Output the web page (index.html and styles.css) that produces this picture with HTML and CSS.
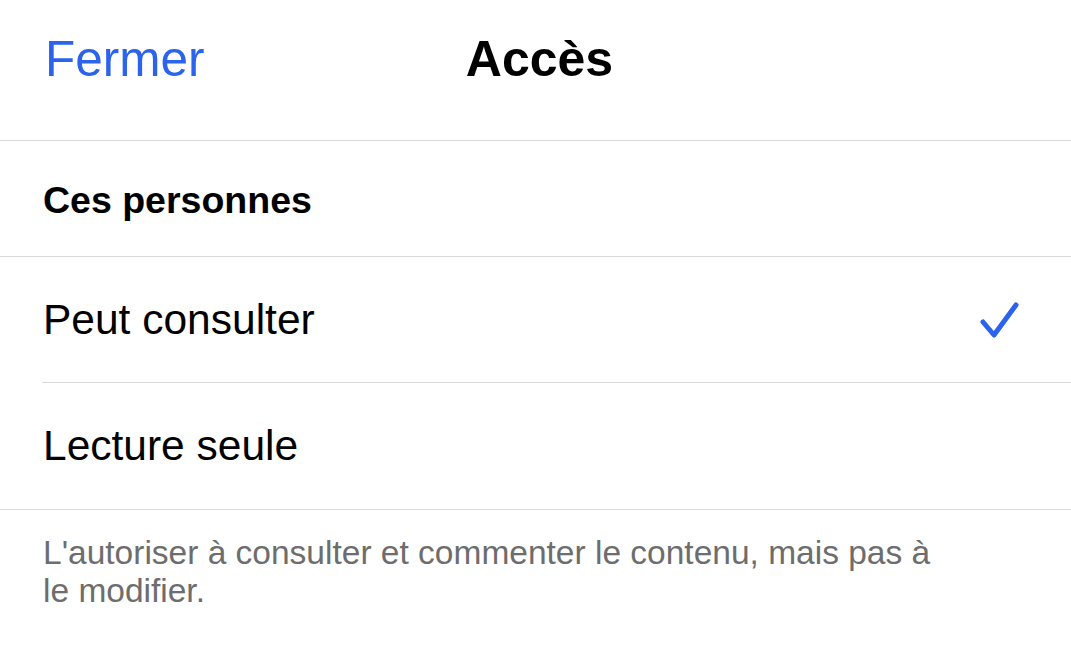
FILE: index.html
```html
<!DOCTYPE html>
<html lang="fr">
<head>
<meta charset="utf-8">
<title>Accès</title>
<link rel="stylesheet" href="styles.css">
</head>
<body>
<div class="screen">
  <header class="nav">
    <div class="nav-left"><span class="nav-close">Fermer</span></div>
    <h1 class="nav-title">Accès</h1>
    <div class="nav-right"></div>
  </header>
  <section class="group-head">
    <h2 class="group-title">Ces personnes</h2>
  </section>
  <ul class="list">
    <li class="row">
      <span class="row-label">Peut consulter</span>
      <svg class="check" width="44" height="44" viewBox="0 0 44 44" aria-hidden="true">
        <path d="M7 24 L18 37 L40 7" fill="none" stroke="#2b63ec" stroke-width="5" stroke-linecap="round" stroke-linejoin="round"/>
      </svg>
    </li>
    <li class="row">
      <span class="row-label">Lecture seule</span>
    </li>
  </ul>
  <p class="footnote">L'autoriser à consulter et commenter le contenu, mais pas à le modifier.</p>
</div>
</body>
</html>
```
FILE: styles.css
```css
* { box-sizing: border-box; }
html, body {
  margin: 0;
  padding: 0;
  background: #ffffff;
}
body {
  font-family: "Liberation Sans", Arial, sans-serif;
  color: #000;
}
.screen {
  width: 1071px;
  min-height: 655px;
}
.nav {
  display: grid;
  grid-template-columns: 1fr auto 1fr;
  align-items: start;
  height: 141px;
  padding: 31px 43px 0 45px;
  border-bottom: 1px solid #d9d9d9;
}
.nav-close {
  font-size: 49.5px;
  line-height: 56px;
  color: #2b63ec;
}
.nav-title {
  margin: 0;
  font-size: 50px;
  line-height: 56px;
  font-weight: 700;
  padding-left: 6px;
}
.group-head {
  height: 116px;
  padding: 37px 43px 0 43px;
  border-bottom: 1px solid #d9d9d9;
}
.group-title {
  margin: 0;
  font-size: 37.5px;
  line-height: 44px;
  font-weight: 700;
}
.list {
  list-style: none;
  margin: 0;
  padding: 0;
  border-bottom: 1px solid #d9d9d9;
}
.row {
  margin-left: 42px;
  padding-left: 1px;
  padding-right: 51px;
  height: 125px;
  display: flex;
  align-items: center;
  justify-content: space-between;
}
.row + .row {
  height: 127px;
  border-top: 1px solid #d9d9d9;
}
.row-label {
  font-size: 42.5px;
  line-height: 50px;
}
.check {
  display: block;
  margin-top: 1px;
}
.footnote {
  margin: 0;
  padding: 24px 0 0 43px;
  max-width: 940px;
  font-size: 33.5px;
  line-height: 38px;
  color: #6d6d6d;
}
```
